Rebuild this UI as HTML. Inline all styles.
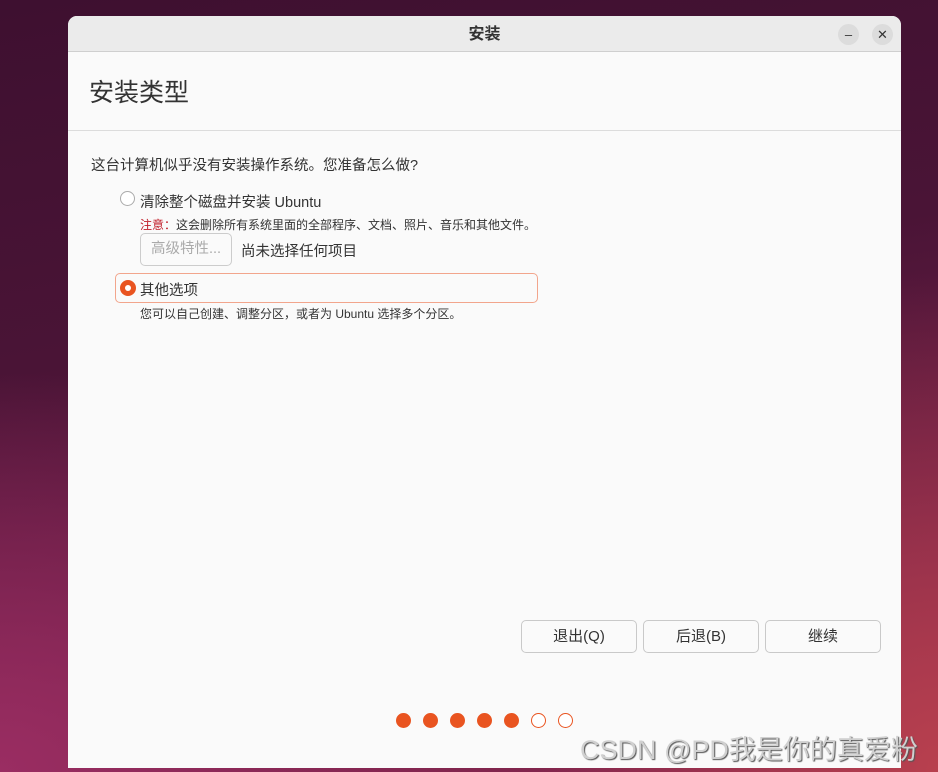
<!DOCTYPE html>
<html><head><meta charset="utf-8">
<style>
*{margin:0;padding:0;box-sizing:border-box}
body{width:938px;height:772px;overflow:hidden;position:relative;font-family:"Liberation Sans","Noto Sans CJK SC",sans-serif;
background:radial-gradient(ellipse 500px 400px at 0% 100%,#9a2d62 0%,rgba(154,45,98,0) 100%),radial-gradient(ellipse 400px 500px at 100% 100%,#b8404e 0%,rgba(184,64,78,0) 100%),linear-gradient(170deg,#3e1030 0%,#4a1436 40%,#6a1d45 70%,#8a2850 100%);}
.win{position:absolute;left:68px;top:16px;width:833px;height:752px;background:#fafafa;border-radius:9px 9px 0 0;overflow:hidden}
.tb{height:36px;background:#ebebeb;border-bottom:1px solid #cfcfcf;text-align:center;font-size:16px;font-weight:bold;color:#333;line-height:38px}
.cb{position:absolute;top:8px;width:21px;height:21px;border-radius:50%;background:#dcdcdc;text-align:center;font-size:13px;line-height:21px;color:#333}
.hd{height:79px;border-bottom:1px solid #dcdcdc;padding-left:21px;font-size:25px;color:#333;line-height:82px}
.t{position:absolute;color:#333;white-space:nowrap}
.radio{position:absolute;width:15px;height:15px;border-radius:50%;border:1px solid #aaa;background:#fff}
.btn{position:absolute;top:604px;height:33px;width:116px;border:1px solid #c9c9c9;border-radius:5px;background:#fafafa;text-align:center;line-height:31px;font-size:15px;color:#333}
.dot{position:absolute;top:697px;width:15px;height:15px;border-radius:50%;background:#e95420}
.dot.o{background:#fff;border:1.5px solid #e95420}
</style></head><body>
<div class="win">
<div class="tb">安装</div>
<div class="cb" style="left:770px">–</div>
<div class="cb" style="left:804px">✕</div>
<div class="hd">安装类型</div>
<div class="t" style="left:23px;top:138px;font-size:14.5px">这台计算机似乎没有安装操作系统。您准备怎么做?</div>
<div class="radio" style="left:52px;top:175px"></div>
<div class="t" style="left:72px;top:175px;font-size:14.5px">清除整个磁盘并安装 Ubuntu</div>
<div class="t" style="left:72px;top:200px;font-size:12px"><span style="color:#c01c28">注意：</span>这会删除所有系统里面的全部程序、文档、照片、音乐和其他文件。</div>
<div style="position:absolute;left:72px;top:217px;width:92px;height:33px;border:1px solid #ccc;border-radius:5px;color:#aaa;font-size:14.5px;line-height:31px;text-align:center">高级特性...</div>
<div class="t" style="left:173px;top:224px;font-size:14.5px">尚未选择任何项目</div>
<div style="position:absolute;left:47px;top:257px;width:423px;height:30px;border:1.5px solid #f2a58c;border-radius:5px"></div>
<div style="position:absolute;left:52px;top:264px;width:16px;height:16px;border-radius:50%;background:#e95420"><div style="position:absolute;left:5px;top:5px;width:6px;height:6px;border-radius:50%;background:#fff"></div></div>
<div class="t" style="left:72px;top:263px;font-size:14.5px">其他选项</div>
<div class="t" style="left:72px;top:289px;font-size:12px">您可以自己创建、调整分区，或者为 Ubuntu 选择多个分区。</div>
<div class="btn" style="left:453px">退出(Q)</div>
<div class="btn" style="left:575px">后退(B)</div>
<div class="btn" style="left:697px">继续</div>
<div class="dot" style="left:328px"></div>
<div class="dot" style="left:355px"></div>
<div class="dot" style="left:382px"></div>
<div class="dot" style="left:409px"></div>
<div class="dot" style="left:436px"></div>
<div class="dot o" style="left:463px"></div>
<div class="dot o" style="left:490px"></div>
</div>
<div class="t" style="left:580px;top:728px;font-size:27px;color:#d0d0d0;text-shadow:1px 1px 1px #555">CSDN @PD我是你的真爱粉</div>
</body></html>
